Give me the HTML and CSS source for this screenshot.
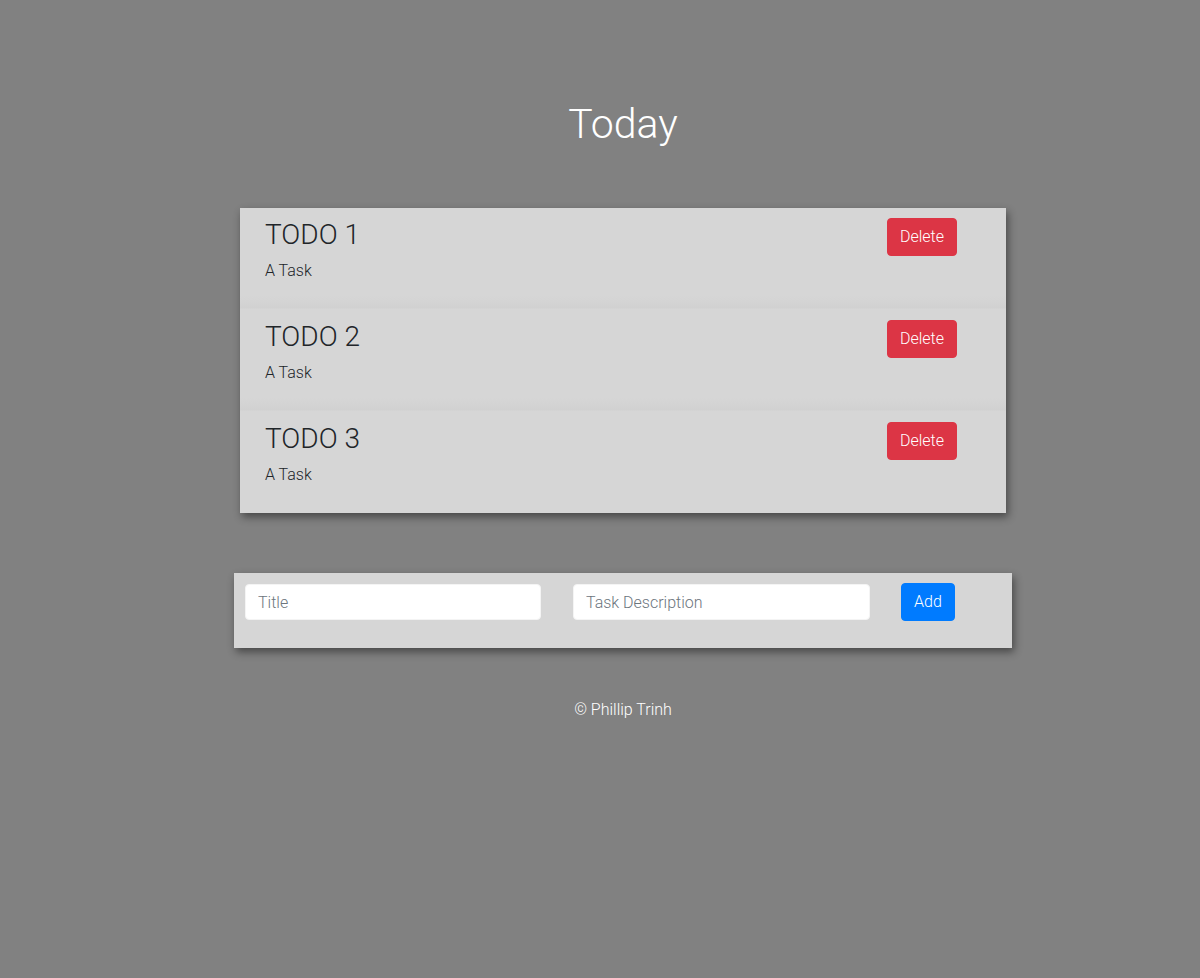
FILE: index.html
```html
<!DOCTYPE html>
<html lang="en">
<head>
<meta charset="utf-8">
<title>Today</title>
<link rel="stylesheet" href="styles.css">
</head>
<body>
<div class="page">
  <h1 class="page-title">Today</h1>
  <div class="todo-list">
    <div class="todo-item">
      <div class="todo-text">
        <h3 class="todo-title">TODO 1</h3>
        <p class="todo-desc">A Task</p>
      </div>
      <button class="btn btn-danger">Delete</button>
    </div>
    <div class="todo-item">
      <div class="todo-text">
        <h3 class="todo-title">TODO 2</h3>
        <p class="todo-desc">A Task</p>
      </div>
      <button class="btn btn-danger">Delete</button>
    </div>
    <div class="todo-item">
      <div class="todo-text">
        <h3 class="todo-title">TODO 3</h3>
        <p class="todo-desc">A Task</p>
      </div>
      <button class="btn btn-danger">Delete</button>
    </div>
  </div>
  <form class="todo-form">
    <input class="form-control input-title" type="text" placeholder="Title">
    <input class="form-control input-desc" type="text" placeholder="Task Description">
    <button type="button" class="btn btn-primary">Add</button>
  </form>
  <footer class="footer">© Phillip Trinh</footer>
</div>
</body>
</html>
```
FILE: styles.css
```css
html, body {
  margin: 0;
  padding: 0;
  background: #818181;
  font-family: Roboto, "Liberation Sans", sans-serif;
  font-weight: 300;
  color: #212529;
}
.page {
  padding-left: 46px;
  padding-top: 100px;
  display: flex;
  flex-direction: column;
  align-items: center;
}
.page-title {
  margin: 0;
  font-size: 41px;
  font-weight: 300;
  line-height: 48px;
  color: #fff;
}
.todo-list {
  margin-top: 60px;
  width: 766px;
  background: #d6d6d6;
  box-shadow: 2px 4px 8px rgba(0, 0, 0, 0.45);
}
.todo-item {
  height: 102px;
  box-sizing: border-box;
  padding: 10px 49px 0 25px;
  display: flex;
  justify-content: space-between;
  align-items: flex-start;
  background: linear-gradient(to bottom, #d6d6d6 0, #d6d6d6 88px, #d1d1d1 100px, #d6d6d6 101px);
}
.todo-item:last-child {
  background: #d6d6d6;
  height: 101px;
}
.todo-title {
  margin: 0 0 7px;
  font-size: 28px;
  font-weight: 300;
  line-height: 1.2;
  color: #212529;
}
.todo-desc {
  margin: 0;
  font-size: 16px;
  font-weight: 300;
  line-height: 24px;
  color: #212529;
}
.btn {
  font-family: Roboto, "Liberation Sans", sans-serif;
  font-size: 16px;
  font-weight: 300;
  line-height: 24px;
  padding: 6px 12px;
  border: 1px solid transparent;
  border-radius: 4px;
  color: #fff;
  cursor: pointer;
}
.btn-danger {
  background: #dc3545;
  border-color: #dc3545;
}
.btn-primary {
  background: #007bff;
  border-color: #007bff;
}
.todo-form {
  margin: 60px 0 0;
  width: 778px;
  height: 75px;
  box-sizing: border-box;
  padding: 10px 0 0 11px;
  display: flex;
  align-items: flex-start;
  background: #d6d6d6;
  box-shadow: 2px 4px 8px rgba(0, 0, 0, 0.45);
}
.form-control {
  box-sizing: border-box;
  height: 36px;
  margin-top: 1px;
  padding: 6px 12px;
  font-family: Roboto, "Liberation Sans", sans-serif;
  font-size: 16px;
  font-weight: 300;
  color: #495057;
  background: #fff;
  border: 1px solid #f4f4f4;
  border-radius: 4px;
  outline: none;
}
.form-control::placeholder {
  color: #6c757d;
}
.input-title {
  width: 296px;
}
.input-desc {
  width: 297px;
  margin-left: 32px;
}
.todo-form .btn-primary {
  margin-left: 31px;
}
.footer {
  margin-top: 50px;
  font-size: 16px;
  font-weight: 300;
  line-height: 24px;
  color: #fff;
}
```
